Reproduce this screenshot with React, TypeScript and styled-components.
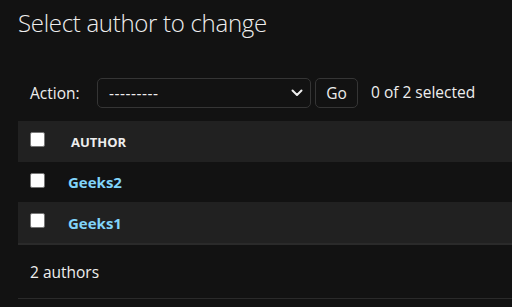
import React from "react";
import styled, { createGlobalStyle } from "styled-components";

const Global = createGlobalStyle`
  html, body { margin: 0; padding: 0; background: #121212; }
  body { font-family: "Open Sans", "Noto Sans", sans-serif; color: #eeeeee; overflow: hidden; }
  * { box-sizing: border-box; }
`;

const Page = styled.div`
  width: 512px;
  height: 307px;
  padding-left: 18px;
  overflow: hidden;
`;

const Title = styled.h1`
  margin: 0;
  padding-top: 6px;
  height: 70px;
  font-size: 24px;
  font-weight: 300;
  letter-spacing: -0.3px;
  line-height: 34px;
  color: #eeeeee;
`;

const Actions = styled.div`
  display: flex;
  align-items: center;
  height: 46px;
  padding-left: 12px;
  font-size: 15.5px;
`;

const Label = styled.span`
  width: 67px;
`;

const SelectBox = styled.div`
  width: 214px;
  height: 30px;
  border: 1px solid #353535;
  border-radius: 5px;
  display: flex;
  align-items: center;
  justify-content: space-between;
  padding: 0 6px 0 11px;
  letter-spacing: 0.5px;
`;

const GoButton = styled.button`
  margin-left: 4px;
  width: 43px;
  height: 30px;
  border: 1px solid #353535;
  border-radius: 5px;
  background: #121212;
  color: #eeeeee;
  font-family: inherit;
  font-size: 15.5px;
  padding: 0;
`;

const Counter = styled.span`
  margin-left: 13px;
  margin-top: -3px;
`;

const Table = styled.div`
  margin-top: 5px;
  display: flex;
  flex-direction: column;
`;

const Row = styled.div<{ $bg: string; $h: number }>`
  display: flex;
  align-items: center;
  height: ${(p) => p.$h}px;
  background: ${(p) => p.$bg};
  padding-left: 12px;
`;

const Check = styled.span`
  width: 15px;
  height: 15px;
  margin-top: -4px;
  background: #ffffff;
  border: 1px solid #767676;
  border-radius: 2px;
  flex-shrink: 0;
`;

const HeadText = styled.span`
  margin-left: 26px;
  font-size: 13px;
  font-weight: 700;
  color: #eeeeee;
`;

const LinkText = styled.a`
  margin-left: 23px;
  font-size: 15px;
  font-weight: 700;
  color: #81d4fa;
  text-decoration: none;
`;

const Divider = styled.div`
  height: 2px;
  background: #2a2a2a;
`;

const Footer = styled.div`
  height: 54px;
  display: flex;
  align-items: center;
  padding-left: 12px;
  font-size: 15.5px;
  border-bottom: 1px solid #2a2a2a;
`;

const Chevron = () => (
  <svg width="14" height="14" viewBox="0 0 14 14">
    <path d="M2.5 4.5 L7 9 L11.5 4.5" stroke="#eeeeee" strokeWidth="2" fill="none" strokeLinecap="round" strokeLinejoin="round" />
  </svg>
);

export default function App() {
  const authors = ["Geeks2", "Geeks1"];
  return (
    <Page>
      <Global />
      <Title>Select author to change</Title>
      <Actions>
        <Label>Action:</Label>
        <SelectBox>
          <span>---------</span>
          <Chevron />
        </SelectBox>
        <GoButton>Go</GoButton>
        <Counter>0 of 2 selected</Counter>
      </Actions>
      <Table>
        <Row $bg="#212121" $h={41}>
          <Check />
          <HeadText>AUTHOR</HeadText>
        </Row>
        {authors.map((a, i) => (
          <Row key={a} $bg={i % 2 === 0 ? "#121212" : "#212121"} $h={i === 0 ? 40 : 41}>
            <Check />
            <LinkText href="#">{a}</LinkText>
          </Row>
        ))}
        <Divider />
      </Table>
      <Footer>2 authors</Footer>
    </Page>
  );
}
